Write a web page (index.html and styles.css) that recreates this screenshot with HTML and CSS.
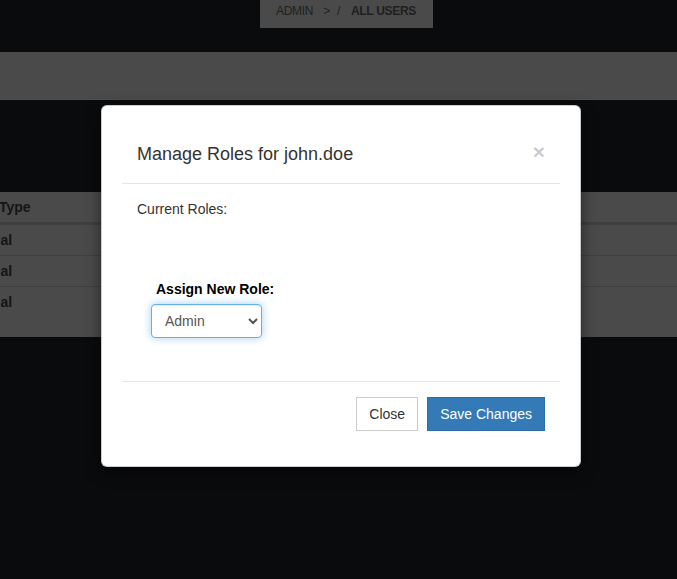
FILE: index.html
```html
<!DOCTYPE html>
<html lang="en">
<head>
<meta charset="utf-8">
<title>Manage Roles</title>
<link rel="stylesheet" href="styles.css">
</head>
<body>
<div class="page">
  <div class="crumbs-row">
    <div class="crumbs"><span class="crumb">ADMIN</span><span class="sep sep-gt">&gt;</span><span class="sep sep-slash">/</span><strong class="crumb-active">ALL USERS</strong></div>
  </div>
  <div class="toolbar"></div>
  <div class="table-wrap">
    <table class="users">
      <thead>
        <tr><th class="col-type">User Type</th><th class="col-rest"></th></tr>
      </thead>
      <tbody>
        <tr><td class="col-type">Normal</td><td></td></tr>
        <tr><td class="col-type">Normal</td><td></td></tr>
        <tr class="tall"><td class="col-type">Normal</td><td></td></tr>
      </tbody>
    </table>
  </div>
</div>

<div class="modal">
  <div class="modal-header">
    <h4 class="modal-title">Manage Roles for john.doe</h4>
    <span class="close">&times;</span>
  </div>
  <div class="modal-body">
    <p class="current">Current Roles:</p>
    <div class="form-group">
      <label class="role-label" for="role">Assign New Role:</label>
      <select id="role" class="role-select">
        <option>Admin</option>
        <option>Editor</option>
        <option>User</option>
      </select>
    </div>
  </div>
  <div class="modal-footer">
    <button class="btn btn-default">Close</button>
    <button class="btn btn-primary">Save Changes</button>
  </div>
</div>
</body>
</html>
```

FILE: styles.css
```css
html, body {
  margin: 0;
  padding: 0;
}
body {
  background: #0a0b0d;
  font-family: "Liberation Sans", Arial, Helvetica, sans-serif;
  font-size: 14px;
  line-height: 20px;
  color: #333;
  height: 579px;
  overflow: hidden;
}

.crumbs-row {
  display: flex;
  padding-left: 260px;
}
.crumbs {
  background: #4a4a4a;
  height: 28px;
  box-sizing: border-box;
  padding: 1px 17px 0 16px;
  font-size: 12px;
  line-height: 20px;
  color: #1f1f1f;
  letter-spacing: -0.3px;
  display: flex;
}
.sep-gt { margin-left: 10px; }
.sep-slash { margin-left: 7px; }
.crumb-active { margin-left: 11px; font-weight: bold; }

.toolbar {
  margin-top: 24px;
  height: 48px;
  background: #4a4a4a;
  border-bottom: 1px solid #4f4f4f;
  box-sizing: border-box;
}

.table-wrap {
  margin-top: 92px;
  overflow: hidden;
}
.users {
  margin-left: -41px;
  width: calc(100% + 41px);
  border-collapse: separate;
  border-spacing: 0;
  background: #4a4a4a;
  color: #141414;
}
.users th, .users td {
  padding: 5px;
  text-align: left;
  vertical-align: top;
  font-weight: bold;
  line-height: 20px;
  height: 20px;
}
.users thead th {
  border-bottom: 2px solid #3f3f3f;
}
.users tbody td {
  border-top: 1px solid #3f3f3f;
}
.users .tall td {
  height: 40px;
}
.col-type { width: 200px; }

.modal {
  position: absolute;
  left: 101px;
  top: 105px;
  width: 480px;
  box-sizing: border-box;
  padding: 20px;
  background: #fff;
  border: 1px solid rgba(0, 0, 0, 0.2);
  border-radius: 6px;
  box-shadow: 0 5px 15px rgba(0, 0, 0, 0.5);
}
.modal-header {
  display: flex;
  justify-content: space-between;
  align-items: flex-start;
  padding: 15px;
  border-bottom: 1px solid #e5e5e5;
}
.modal-title {
  margin: 0;
  font-size: 18px;
  font-weight: normal;
  line-height: 27px;
  color: #333;
}
.close {
  font-size: 21px;
  font-weight: bold;
  line-height: 1;
  color: #000;
  opacity: 0.2;
  margin-top: 0;
}
.modal-body {
  padding: 15px;
}
.current {
  margin: 0;
}
.form-group {
  margin: 60px 0 28px;
  padding-left: 14px;
  display: flex;
  flex-direction: column;
  align-items: flex-start;
}
.role-label {
  font-weight: bold;
  color: #000;
  margin: 0 0 5px 5px;
}
.role-select {
  width: 111px;
  height: 34px;
  padding: 6px 8px 6px 9px;
  font-family: "Liberation Sans", Arial, sans-serif;
  font-size: 14px;
  color: #555;
  background-color: #fff;
  border: 1px solid #66afe9;
  border-radius: 4px;
  outline: none;
  box-shadow: inset 0 1px 1px rgba(0, 0, 0, 0.075), 0 0 8px rgba(102, 175, 233, 0.6);
}
.modal-footer {
  display: flex;
  justify-content: flex-end;
  gap: 9px;
  padding: 15px;
  border-top: 1px solid #e5e5e5;
}
.btn {
  font-family: "Liberation Sans", Arial, sans-serif;
  font-size: 14px;
  line-height: 20px;
  padding: 6px 12px;
  border: 1px solid transparent;
  border-radius: 0;
  cursor: pointer;
}
.btn-default {
  background: #fff;
  border-color: #ccc;
  color: #333;
}
.btn-primary {
  background: #337ab7;
  border-color: #2e6da4;
  color: #fff;
}
```
